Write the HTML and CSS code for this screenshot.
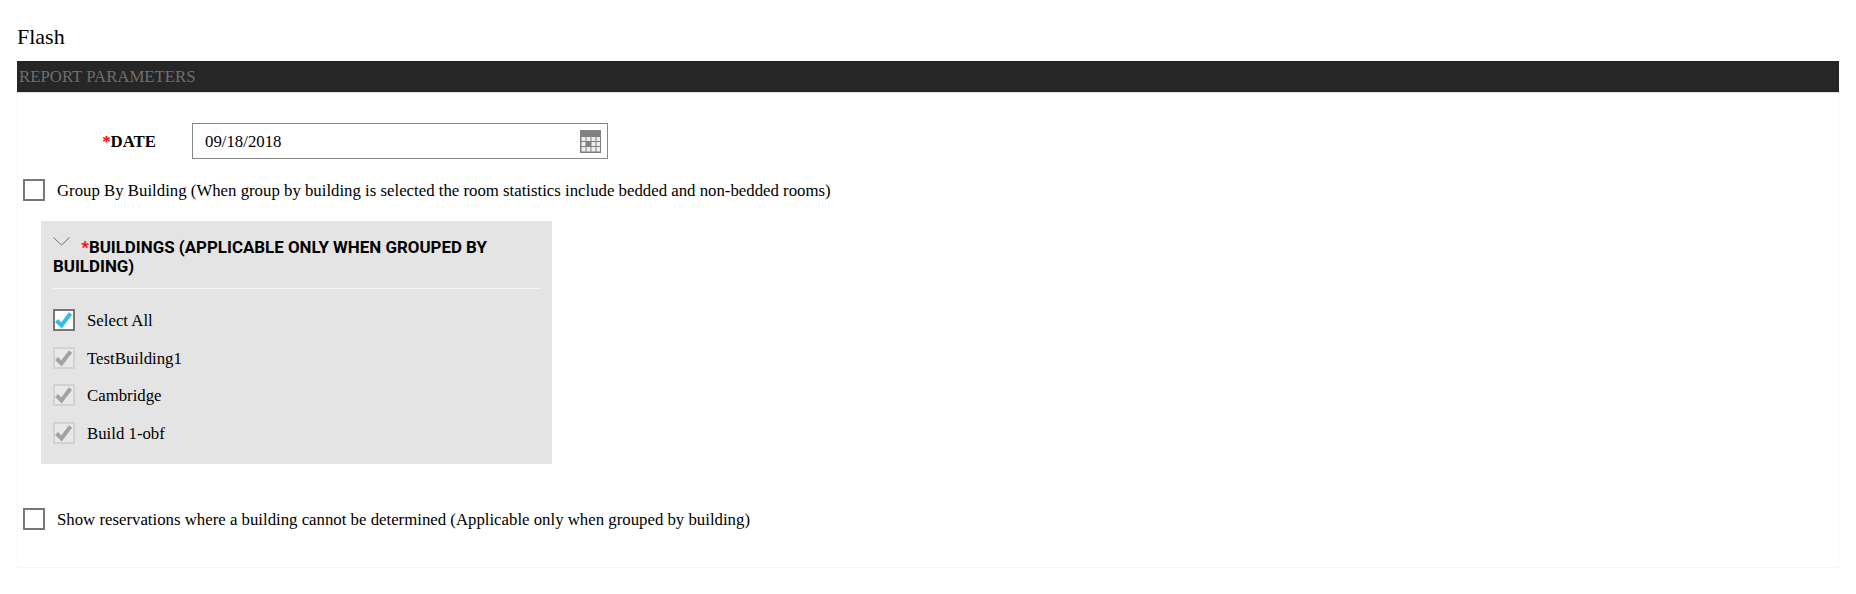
FILE: index.html
```html
<!DOCTYPE html>
<html lang="en">
<head>
    <meta charset="UTF-8">
    <title>Flash</title>
    <link rel="stylesheet" href="styles.css">
</head>
<body>
    <h1 class="page-title">Flash</h1>
    <div class="section-bar">REPORT PARAMETERS</div>
    <div class="params">
        <div class="date-row">
            <label class="date-label"><span class="req">*</span>DATE</label>
            <div class="date-input">
                <span class="text">09/18/2018</span>
                <svg class="cal-icon" width="21" height="23" viewBox="0 0 21 23">
                    <rect width="21" height="23" fill="#808080"/>
                    <path fill="#eeeeee" d="M1.5 7h4v4h-4zM6.5 7h4v4h-4zM11.5 7h4v4h-4zM16.5 7h3.5v4h-3.5zM1.5 12h4v4h-4zM11.5 12h4v4h-4zM16.5 12h3.5v4h-3.5zM1.5 17h4v4.5h-4zM6.5 17h4v4.5h-4zM11.5 17h4v4.5h-4zM16.5 17h3.5v4.5h-3.5z"/>
                </svg>
            </div>
        </div>

        <div class="check-row group-row">
            <span class="box"></span>
            <span class="text">Group By Building (When group by building is selected the room statistics include bedded and non-bedded rooms)</span>
        </div>

        <div class="buildings">
            <div class="buildings-head">
                <svg class="chevron" width="17" height="9" viewBox="0 0 17 9">
                    <path d="M0.5 1.5L8.5 9L16.5 1.5" fill="none" stroke="#6e6e6e" stroke-width="1"/>
                </svg>
                <span class="req">*</span>BUILDINGS (APPLICABLE ONLY WHEN GROUPED BY BUILDING)
            </div>
            <div class="building-list">
                <div class="check-row item">
                    <span class="box checked">
                        <svg width="18" height="18" viewBox="0 0 18 18"><path d="M1.5 9.5L6.5 14.5L15.5 2.5" fill="none" stroke="#2fc0e6" stroke-width="4"/></svg>
                    </span>
                    <span class="text">Select All</span>
                </div>
                <div class="check-row item">
                    <span class="box disabled">
                        <svg width="18" height="18" viewBox="0 0 18 18"><path d="M1.5 9.5L6.5 14.5L15.5 2.5" fill="none" stroke="#a3a3a3" stroke-width="4"/></svg>
                    </span>
                    <span class="text">TestBuilding1</span>
                </div>
                <div class="check-row item">
                    <span class="box disabled">
                        <svg width="18" height="18" viewBox="0 0 18 18"><path d="M1.5 9.5L6.5 14.5L15.5 2.5" fill="none" stroke="#a3a3a3" stroke-width="4"/></svg>
                    </span>
                    <span class="text">Cambridge</span>
                </div>
                <div class="check-row item">
                    <span class="box disabled">
                        <svg width="18" height="18" viewBox="0 0 18 18"><path d="M1.5 9.5L6.5 14.5L15.5 2.5" fill="none" stroke="#a3a3a3" stroke-width="4"/></svg>
                    </span>
                    <span class="text">Build 1-obf</span>
                </div>
            </div>
        </div>

        <div class="check-row reservations-row">
            <span class="box"></span>
            <span class="text">Show reservations where a building cannot be determined (Applicable only when grouped by building)</span>
        </div>
    </div>
</body>
</html>
```

FILE: styles.css
```css
body {
    font-family: "Liberation Serif", "Times New Roman", serif;
    font-size: 16.8px;
    color: #000;
    background-color: #fff;
    margin: 0;
    padding: 0 17px;
}
.page-title {
    font-size: 22px;
    font-weight: normal;
    line-height: 24px;
    margin: 0;
    padding-top: 25px;
    height: 36px;
}
.section-bar {
    background-color: #262626;
    color: #6e6e6e;
    height: 31px;
    line-height: 31px;
    padding-left: 2px;
    border-bottom: 1px solid #e0e0e0;
}
.params {
    height: 475px;
    box-sizing: border-box;
    border: 1px solid #f8f8f8;
    border-top: none;
    padding-top: 30px;
}
.req {
    color: #f00;
}
.text {
    margin-top: 2px;
}
.date-row {
    display: flex;
    align-items: center;
}
.date-label {
    width: 138px;
    margin: 2px 36px 0 0;
    text-align: right;
    font-weight: bold;
}
.date-input {
    width: 416px;
    height: 36px;
    box-sizing: border-box;
    border: 1px solid #888;
    padding: 0 6px 0 12px;
    display: flex;
    align-items: center;
    justify-content: space-between;
}
.check-row {
    display: flex;
    align-items: center;
}
.box {
    width: 22px;
    height: 22px;
    box-sizing: border-box;
    border: 2px solid #777;
    background-color: #fff;
    flex-shrink: 0;
    display: flex;
    align-items: center;
    justify-content: center;
}
.box.disabled {
    background-color: #e8e8e8;
    border-color: #d2d2d2;
}
.group-row {
    margin: 20px 0 0 5px;
    gap: 12px;
}
.buildings {
    width: 511px;
    height: 243px;
    box-sizing: border-box;
    margin: 20px 0 0 23px;
    padding: 15px 12px 0;
    background-color: #e4e4e4;
}
.buildings-head {
    font-family: Roboto, sans-serif;
    font-weight: 700;
    font-size: 16.9px;
    line-height: 19px;
    padding-bottom: 12px;
    border-bottom: 1px solid #f4f4f4;
}
.chevron {
    margin: 0 7px 4px 0;
    vertical-align: 4px;
    overflow: visible;
}
.building-list {
    padding-top: 20px;
    display: flex;
    flex-direction: column;
    gap: 15.5px;
}
.item {
    gap: 12px;
}
.reservations-row {
    margin: 44px 0 0 5px;
    gap: 12px;
}
```
